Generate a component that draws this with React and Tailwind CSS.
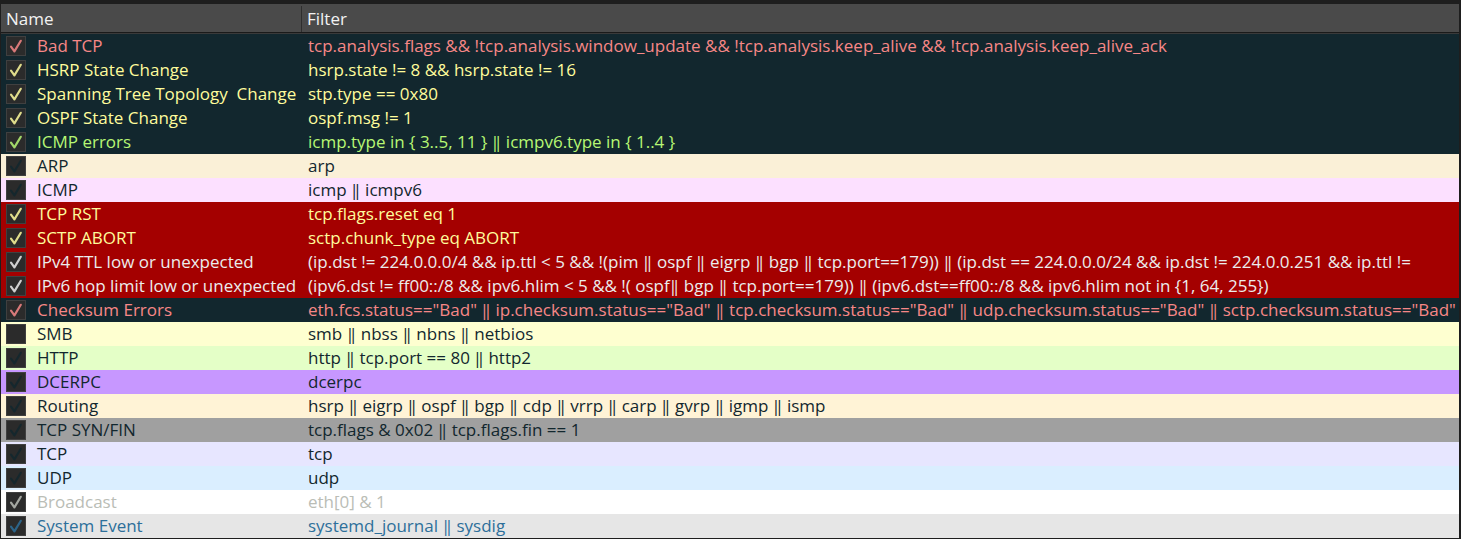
const rules = [
  { name: 'Bad TCP', filter: 'tcp.analysis.flags && !tcp.analysis.window_update && !tcp.analysis.keep_alive && !tcp.analysis.keep_alive_ack', row: 'bg-[#12272e] text-[#f78787]', check: '#f78787' },
  { name: 'HSRP State Change', filter: 'hsrp.state != 8 && hsrp.state != 16', row: 'bg-[#12272e] text-[#fffc9c]', check: '#fffc9c' },
  { name: 'Spanning Tree Topology  Change', filter: 'stp.type == 0x80', row: 'bg-[#12272e] text-[#fffc9c]', check: '#fffc9c' },
  { name: 'OSPF State Change', filter: 'ospf.msg != 1', row: 'bg-[#12272e] text-[#fffc9c]', check: '#fffc9c' },
  { name: 'ICMP errors', filter: 'icmp.type in { 3..5, 11 } || icmpv6.type in { 1..4 }', row: 'bg-[#12272e] text-[#b7f774]', check: '#b7f774' },
  { name: 'ARP', filter: 'arp', row: 'bg-[#faf0d7] text-[#12272e]', check: '#12272e' },
  { name: 'ICMP', filter: 'icmp || icmpv6', row: 'bg-[#fce0ff] text-[#12272e]', check: '#12272e' },
  { name: 'TCP RST', filter: 'tcp.flags.reset eq 1', row: 'bg-[#a40000] text-[#fffc9c]', check: '#fffc9c' },
  { name: 'SCTP ABORT', filter: 'sctp.chunk_type eq ABORT', row: 'bg-[#a40000] text-[#fffc9c]', check: '#fffc9c' },
  { name: 'IPv4 TTL low or unexpected', filter: '(ip.dst != 224.0.0.0/4 && ip.ttl < 5 && !(pim || ospf || eigrp || bgp || tcp.port==179)) || (ip.dst == 224.0.0.0/24 && ip.dst != 224.0.0.251 && ip.ttl !=', row: 'bg-[#a40000] text-[#ececec]', check: '#ececec' },
  { name: 'IPv6 hop limit low or unexpected', filter: '(ipv6.dst != ff00::/8 && ipv6.hlim < 5 && !( ospf|| bgp || tcp.port==179)) || (ipv6.dst==ff00::/8 && ipv6.hlim not in {1, 64, 255})', row: 'bg-[#a40000] text-[#ececec]', check: '#ececec' },
  { name: 'Checksum Errors', filter: 'eth.fcs.status=="Bad" || ip.checksum.status=="Bad" || tcp.checksum.status=="Bad" || udp.checksum.status=="Bad" || sctp.checksum.status=="Bad"', row: 'bg-[#12272e] text-[#f78787]', check: '#f78787' },
  { name: 'SMB', filter: 'smb || nbss || nbns || netbios', row: 'bg-[#feffd0] text-[#12272e]', check: null },
  { name: 'HTTP', filter: 'http || tcp.port == 80 || http2', row: 'bg-[#e4ffc7] text-[#12272e]', check: '#12272e' },
  { name: 'DCERPC', filter: 'dcerpc', row: 'bg-[#c797ff] text-[#12272e]', check: '#12272e' },
  { name: 'Routing', filter: 'hsrp || eigrp || ospf || bgp || cdp || vrrp || carp || gvrp || igmp || ismp', row: 'bg-[#fff3d6] text-[#12272e]', check: '#12272e' },
  { name: 'TCP SYN/FIN', filter: 'tcp.flags & 0x02 || tcp.flags.fin == 1', row: 'bg-[#a0a0a0] text-[#12272e]', check: '#12272e' },
  { name: 'TCP', filter: 'tcp', row: 'bg-[#e7e6ff] text-[#12272e]', check: '#12272e' },
  { name: 'UDP', filter: 'udp', row: 'bg-[#daeeff] text-[#12272e]', check: '#12272e' },
  { name: 'Broadcast', filter: 'eth[0] & 1', row: 'bg-[#ffffff] text-[#babdb6]', check: '#babdb6' },
  { name: 'System Event', filter: 'systemd_journal || sysdig', row: 'bg-[#e6e6e6] text-[#2d6f9a]', check: '#2d6f9a' },
];

function CheckBox({ color }) {
  return (
    <div className="w-[20px] h-[20px] shrink-0 bg-[#2b2b2b] border border-[#404040] flex items-center justify-center">
      {color && (
        <svg width="16" height="16" viewBox="0 0 16 16" fill="none">
          <path d="M3 8.6 L6.4 13.4 L12.8 2.8" stroke={color} strokeOpacity="0.85" strokeWidth="2.2" strokeLinecap="round" strokeLinejoin="round" />
        </svg>
      )}
    </div>
  );
}

// Segoe-style "||" is tight; Open Sans spaces the bars apart
function FilterText({ text }) {
  const parts = text.split('||');
  return parts.map((p, i) => (
    <span key={i}>
      {p}
      {i < parts.length - 1 && <span className="tracking-[-6px] -ml-[1.5px] pr-[4.5px]">||</span>}
    </span>
  ));
}

export default function App() {
  return (
    <div className="w-[1461px] h-[539px] bg-[#1e1e1e] pt-[4px] pl-[1px] pr-[2px] overflow-hidden text-[17px] leading-[24px] font-['Segoe_UI','Open_Sans',sans-serif]">
      <div className="flex h-[29px] pt-[2px] bg-[#4a4a4a] border-b border-[#1a1a1a] text-[#f2f2f2] items-center">
        <div className="w-[301px] h-full pl-[5px] flex items-center border-r border-[#2e2e2e]">Name</div>
        <div className="flex-1 pl-[5px]">Filter</div>
      </div>
      <div className="h-[1px] bg-[#3a3a3a]" />
      {rules.map((r) => (
        <div key={r.name} className={`flex h-[24px] items-center ${r.row}`}>
          <div className="w-[301px] shrink-0 flex items-center pl-[5px] whitespace-pre">
            <CheckBox color={r.check} />
            <span className="ml-[11px]">{r.name}</span>
          </div>
          <div className="flex-1 pl-[6px] whitespace-nowrap overflow-hidden">
            <FilterText text={r.filter} />
          </div>
        </div>
      ))}
    </div>
  );
}
